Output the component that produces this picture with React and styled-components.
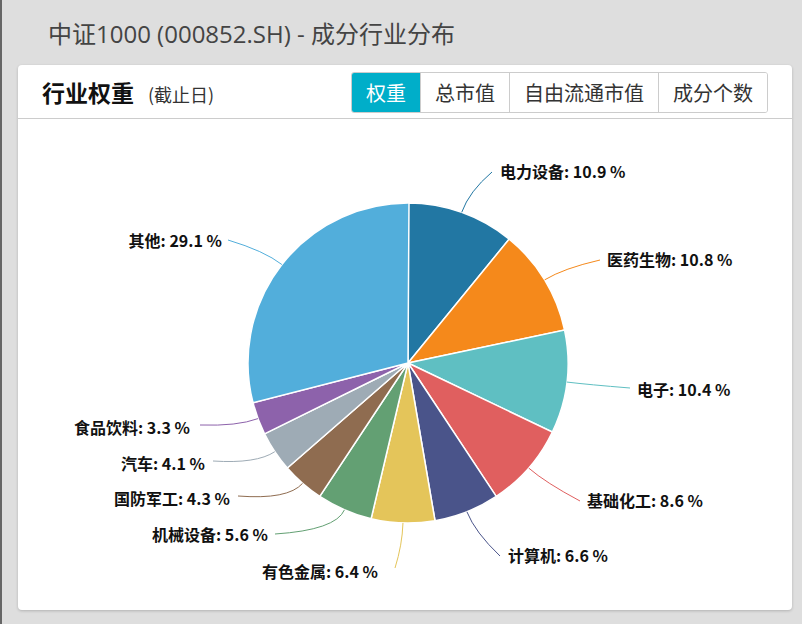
import React from "react";
import styled, { createGlobalStyle } from "styled-components";

const Global = createGlobalStyle`
  html, body { margin: 0; background: #dedede; }
  body { font-family: "Open Sans", "Noto Sans CJK SC", sans-serif; border-left: 2px solid #666; min-height: 624px; box-sizing: border-box; }
`;
const Page = styled.div`padding: 0 10px 0 16px; display: flex; flex-direction: column;`;
const Title = styled.h1`
  margin: 0; font-weight: 400; font-size: 24px; color: #444; padding: 15px 0 0 30px; height: 65px; box-sizing: border-box;
`;
const Card = styled.div`
  background: #fff; border-radius: 4px; box-shadow: 0 1px 3px rgba(0,0,0,0.2); height: 545px; display: flex; flex-direction: column;
`;
const Header = styled.div`
  height: 53px; border-bottom: 1px solid #ccc; display: flex; align-items: center; padding: 0 24px; justify-content: space-between;
`;
const HTitle = styled.div`
  font-size: 23px; font-weight: 700; color: #111; font-family: "Noto Sans CJK SC", sans-serif;
  span { font-size: 18px; font-weight: 400; color: #333; margin-left: 14px; }
`;
const Tabs = styled.div`display: flex; border: 1px solid #ccc; border-radius: 3px; overflow: hidden; margin-top: 1px;`;
const Tab = styled.div`
  font-family: "Noto Sans CJK SC", sans-serif; font-size: 20px; height: 39px; line-height: 39px; padding: 0 14px;
  background: ${p => (p.$active ? "#00aec9" : "#fff")}; color: ${p => (p.$active ? "#fff" : "#333")};
  & + & { border-left: 1px solid #ccc; }
`;

const data = [
  ["电力设备", 10.9, "#2277a3", [492, 172], "start", [500, 178]],
  ["医药生物", 10.8, "#f5891b", [600, 260], "start", [607, 266]],
  ["电子", 10.4, "#5fbfc2", [630, 388], "start", [637, 396]],
  ["基础化工", 8.6, "#e05f5f", [580, 501], "start", [587, 507]],
  ["计算机", 6.6, "#4a548a", [500, 556], "start", [508, 562]],
  ["有色金属", 6.4, "#e4c55a", [395, 568], "end", [378, 578]],
  ["机械设备", 5.6, "#63a073", [275, 534], "end", [268, 541]],
  ["国防军工", 4.3, "#8f6c50", [238, 496], "end", [230, 505]],
  ["汽车", 4.1, "#9eabb5", [213, 461], "end", [205, 470]],
  ["食品饮料", 3.3, "#8d62ab", [200, 425], "end", [190, 434]],
  ["其他", 29.1, "#52aedb", [228, 240], "end", [222, 247]],
];

function Chart() {
  const cx = 408, cy = 363, r = 160;
  let acc = 0;
  const pt = (f, rad) => [cx + rad * Math.sin(f * 2 * Math.PI), cy - rad * Math.cos(f * 2 * Math.PI)];
  return (
    <svg width="772" height="491" viewBox="18 119 772 491" style={{ display: "block" }}>
      {data.map(([name, v, c, end, anchor, tp]) => {
        const a0 = acc / 100, a1 = (acc + v) / 100, mid = (acc + v / 2) / 100;
        acc += v;
        const [x0, y0] = pt(a0, r), [x1, y1] = pt(a1, r);
        const large = a1 - a0 > 0.5 ? 1 : 0;
        const [ex, ey] = pt(mid, r);
        const [ox, oy] = pt(mid, r + 22);
        return (
          <g key={name}>
            <path d={`M${cx},${cy} L${x0},${y0} A${r},${r} 0 ${large} 1 ${x1},${y1} Z`} fill={c} stroke="#fff" strokeWidth="1.5" />
            <path d={`M${ex},${ey} Q${ox},${oy} ${end[0]},${end[1]}`} fill="none" stroke={c} strokeWidth="1" />
            <text x={tp[0]} y={tp[1]} textAnchor={anchor} fontSize="16" fontWeight="700" fill="#111" fontFamily="'Noto Sans CJK SC', sans-serif">
              {name}: {v} %
            </text>
          </g>
        );
      })}
    </svg>
  );
}

export default function App() {
  return (
    <Page>
      <Global />
      <Title>中证1000 (000852.SH) - 成分行业分布</Title>
      <Card>
        <Header>
          <HTitle>行业权重<span>(截止日)</span></HTitle>
          <Tabs>
            <Tab $active>权重</Tab>
            <Tab>总市值</Tab>
            <Tab>自由流通市值</Tab>
            <Tab>成分个数</Tab>
          </Tabs>
        </Header>
        <Chart />
      </Card>
    </Page>
  );
}
